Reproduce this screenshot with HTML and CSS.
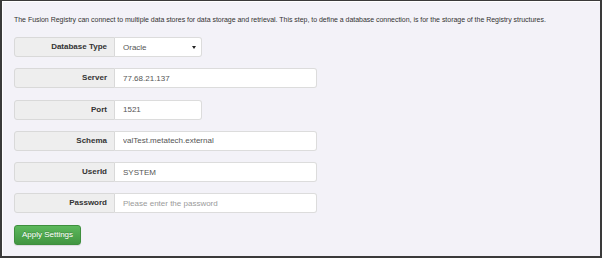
FILE: index.html
```html
<!DOCTYPE html>
<html>
<head>
    <meta charset="UTF-8">
    <link rel="stylesheet" href="styles.css">
</head>
<body>
    <div class="frame">
        <p class="intro">The Fusion Registry can connect to multiple data stores for data storage and retrieval. This step, to define a database connection, is for the storage of the Registry structures.</p>

        <div class="form">
            <!-- 数据库类型 -->
            <div class="field short">
                <label class="addon">Database Type</label>
                <div class="select-wrap">
                    <select class="control">
                        <option>Oracle</option>
                    </select>
                    <span class="caret"></span>
                </div>
            </div>
            <div class="field">
                <label class="addon">Server</label>
                <input class="control" type="text" value="77.68.21.137">
            </div>
            <div class="field short">
                <label class="addon">Port</label>
                <input class="control" type="text" value="1521">
            </div>
            <div class="field">
                <label class="addon">Schema</label>
                <input class="control" type="text" value="valTest.metatech.external">
            </div>
            <div class="field">
                <label class="addon">UserId</label>
                <input class="control" type="text" value="SYSTEM">
            </div>
            <div class="field">
                <label class="addon">Password</label>
                <input class="control" type="password" placeholder="Please enter the password">
            </div>
            <div class="actions">
                <button class="btn-apply">Apply Settings</button>
            </div>
        </div>
    </div>
</body>
</html>
```

FILE: styles.css
```css
html, body {
    margin: 0;
    padding: 0;
}
body {
    font-family: 'Liberation Sans', Arial, sans-serif;
    background: #3a3a3a;
}
.frame {
    box-sizing: border-box;
    width: 602px;
    height: 258px;
    border-top: 1px solid #3a3a3a;
    border-left: 2px solid #3a3a3a;
    border-right: 2px solid #3a3a3a;
    border-bottom: 2px solid #3a3a3a;
    background: #f3f2f8;
    box-shadow: inset 1px 1px 0 #ffffff;
    padding: 14px 12px 0 12px;
}
.intro {
    margin: 0;
    font-size: 7px;
    line-height: 10px;
    letter-spacing: -0.03px;
    color: #333;
}
.form {
    margin-top: 12px;
    display: flex;
    flex-direction: column;
    gap: 11.25px;
}
.field {
    display: flex;
    width: 303px;
    height: 20px;
}
.field.short {
    width: 188px;
}
.addon {
    box-sizing: border-box;
    flex: 0 0 101px;
    height: 20px;
    background: #eeeeee;
    border: 1px solid #d9d9d9;
    border-radius: 3px 0 0 3px;
    font-size: 8px;
    font-weight: bold;
    color: #333;
    text-align: right;
    padding-right: 7px;
    line-height: 18px;
}
.control {
    box-sizing: border-box;
    flex: 1;
    width: 100%;
    height: 20px;
    margin: 0;
    border: 1px solid #dcdcdc;
    border-left: none;
    border-radius: 0 3px 3px 0;
    background: #fff;
    font-family: inherit;
    font-size: 8px;
    color: #555;
    padding: 0 8px;
    outline: none;
}
.control::placeholder {
    color: #9a9a9a;
}
.select-wrap {
    position: relative;
    flex: 1;
    display: flex;
}
select.control {
    -webkit-appearance: none;
    appearance: none;
}
.caret {
    position: absolute;
    right: 6px;
    top: 9px;
    width: 0;
    height: 0;
    border-left: 2px solid transparent;
    border-right: 2px solid transparent;
    border-top: 3px solid #222;
}
.actions {
    display: flex;
}
.btn-apply {
    box-sizing: border-box;
    width: 67px;
    height: 20px;
    border: 1px solid #3e8f3e;
    border-radius: 3px;
    background: linear-gradient(to bottom, #5cb85c, #419641);
    color: #fff;
    font-family: inherit;
    font-size: 8px;
    padding: 0;
    text-shadow: 0 -1px 0 rgba(0,0,0,0.2);
    box-shadow: 0 1px 1px rgba(0,0,0,0.1);
}
```
